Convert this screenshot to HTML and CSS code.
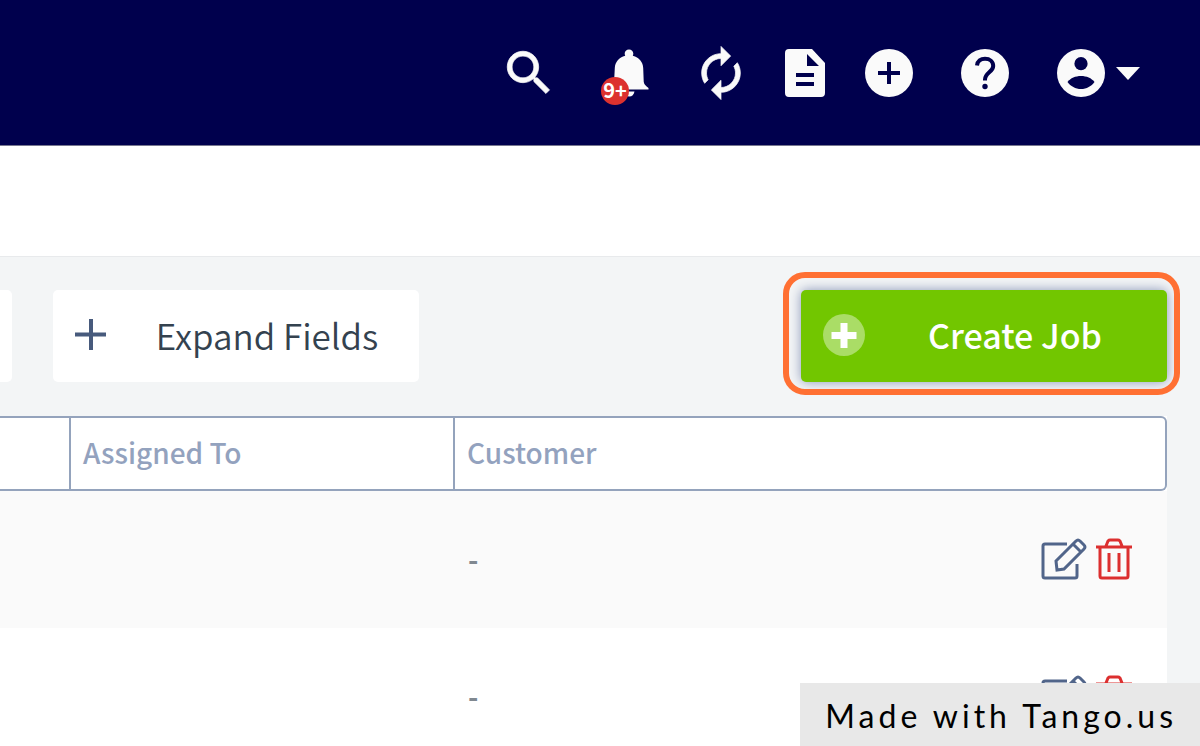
FILE: index.html
```html
<!DOCTYPE html>
<html lang="en">
<head>
    <meta charset="UTF-8">
    <meta name="viewport" content="width=device-width, initial-scale=1.0">
    <title>Jobs</title>
    <link rel="stylesheet" href="styles.css">
</head>
<body>
    <header class="topbar">
        <button type="button" class="icon-btn" aria-label="Search">
            <svg class="icon icon-thick" viewBox="0 0 24 24"><path d="M15.5 14h-.79l-.28-.27C15.41 12.59 16 11.11 16 9.5 16 5.91 13.09 3 9.5 3S3 5.91 3 9.5 5.91 16 9.5 16c1.61 0 3.09-.59 4.23-1.57l.27.28v.79l5 4.99L20.49 19l-4.99-5zm-6 0C7.01 14 5 11.99 5 9.5S7.01 5 9.5 5 14 7.01 14 9.5 11.99 14 9.5 14z"/></svg>
        </button>
        <button type="button" class="icon-btn" aria-label="Notifications">
            <svg class="icon" viewBox="0 0 58 58"><path d="M33 5.500c2.500 0 4.300 1.700 4.300 4 0 .8-.2 1.500-.5 2.200C43 13.500 47 18 47.200 24l.5 13.500c.2 2.500 1.500 4 4.800 6.500v1.500H14V44c3-2 4-4 4.100-6.500l.7-13.500c.3-6 4.200-10.500 10.400-12.300-.3-.7-.5-1.400-.5-2.200 0-2.300 1.800-4 4.300-4z"/><path d="M28 47.500h10.500c-.5 3-2.500 5-5.200 5s-4.800-2-5.300-5z"/></svg>
            <span class="count">9+</span>
        </button>
        <button type="button" class="icon-btn" aria-label="Refresh">
            <svg class="icon icon-thick" viewBox="0 0 24 24"><path d="M12 6v3l4-4-4-4v3c-4.420 0-8 3.580-8 8 0 1.570.46 3.030 1.240 4.260L6.700 14.800c-.45-.83-.7-1.790-.7-2.800 0-3.310 2.690-6 6-6zm6.760 1.740L17.300 9.200c.44.84.7 1.790.7 2.800 0 3.310-2.690 6-6 6v-3l-4 4 4 4v-3c4.420 0 8-3.580 8-8 0-1.570-.46-3.030-1.240-4.260z"/></svg>
        </button>
        <button type="button" class="icon-btn doc-btn" aria-label="Documents">
            <svg class="icon icon-doc" viewBox="0 0 40 48"><path fill-rule="evenodd" d="M4 0h23l13 14v30a4 4 0 0 1-4 4H4a4 4 0 0 1-4-4V4a4 4 0 0 1 4-4zM22 5v12h12zM11 24v4h18v-4zM11 33v4h18v-4z"/></svg>
        </button>
        <button type="button" class="icon-btn" aria-label="Add">
            <svg class="icon" viewBox="0 0 58 58"><circle cx="29" cy="29" r="24"/><path class="cut" d="M29 18v22M18 29h22"/></svg>
        </button>
        <button type="button" class="icon-btn" aria-label="Help">
            <svg class="icon" viewBox="0 0 58 58"><circle cx="29" cy="29" r="24"/><path class="cut" d="M21 21.500c.5-4.500 3.800-6.800 8-6.800 4.800 0 8.200 2.900 8.200 7.200 0 6-8.200 7-8.200 13.600v1"/><circle class="hole" cx="29" cy="42.500" r="2.700"/></svg>
        </button>
        <button type="button" class="icon-btn user-btn" aria-label="Account">
            <svg class="icon" viewBox="0 0 58 58"><circle cx="29" cy="29" r="24"/><circle class="hole" cx="29" cy="19.700" r="6.600"/><path class="hole" d="M15.500 38c3-4 8-6 13.500-6s10.500 2 13.500 6c-3 4.300-8 7-13.500 7s-10.500-2.700-13.500-7z"/></svg>
            <svg class="caret" viewBox="0 0 24 13"><path d="M0 0h24L12 13z"/></svg>
        </button>
    </header>
    <div class="subbar"></div>
    <main>
        <div class="toolbar">
            <button type="button" class="btn btn-cut" aria-label="Filter"></button>
            <button type="button" class="btn">
                <svg class="btn-icon" viewBox="0 0 42 42"><path class="plus-thin" d="M16 5v31M0 20.500h31"/></svg>
                <span class="btn-text">Expand Fields</span>
            </button>
            <div class="highlight">
                <button type="button" class="btn btn-create">
                    <svg class="btn-icon" viewBox="0 0 42 42"><circle cx="21" cy="21" r="21"/><path class="plus-bold" d="M21 9v25M8.500 21.500h25"/></svg>
                    <span class="btn-text">Create Job</span>
                </button>
            </div>
        </div>
        <table class="jobs">
            <colgroup>
                <col class="col-first">
                <col class="col-assigned">
                <col>
            </colgroup>
            <thead>
                <tr>
                    <th></th>
                    <th>Assigned To</th>
                    <th>Customer</th>
                </tr>
            </thead>
            <tbody>
                <tr>
                    <td></td>
                    <td></td>
                    <td>
                        <div class="cell">
                            <span>-</span>
                            <div class="actions">
                                <button type="button" class="icon-btn edit" aria-label="Edit">
                                    <svg viewBox="0 0 46 42"><path d="M26 6H4Q2 6 2 8v30q0 2 2 2h30q2 0 2-2V26"/><path d="M16 32l-1-9L35 3q2-2 4 0l4 4q2 2 0 4L23 31zM32 6l8 8"/></svg>
                                </button>
                                <button type="button" class="icon-btn delete" aria-label="Delete">
                                    <svg viewBox="0 0 36 42"><path d="M0 9h36M10 8l2-5q1-1 2-1h8q1 0 2 1l2 5M4 9v29q0 2 2 2h24q2 0 2-2V9"/><path d="M13 15v19M23 15v19"/></svg>
                                </button>
                            </div>
                        </div>
                    </td>
                </tr>
                <tr>
                    <td></td>
                    <td></td>
                    <td>
                        <div class="cell">
                            <span>-</span>
                            <div class="actions">
                                <button type="button" class="icon-btn edit" aria-label="Edit">
                                    <svg viewBox="0 0 46 42"><path d="M26 6H4Q2 6 2 8v30q0 2 2 2h30q2 0 2-2V26"/><path d="M16 32l-1-9L35 3q2-2 4 0l4 4q2 2 0 4L23 31zM32 6l8 8"/></svg>
                                </button>
                                <button type="button" class="icon-btn delete" aria-label="Delete">
                                    <svg viewBox="0 0 36 42"><path d="M0 9h36M10 8l2-5q1-1 2-1h8q1 0 2 1l2 5M4 9v29q0 2 2 2h24q2 0 2-2V9"/><path d="M13 15v19M23 15v19"/></svg>
                                </button>
                            </div>
                        </div>
                    </td>
                </tr>
            </tbody>
        </table>
    </main>
    <div class="made-with">Made with Tango.us</div>
</body>
</html>
```
FILE: styles.css
```css
* {
    box-sizing: border-box;
}

body {
    margin: 0;
    height: 100vh;
    overflow: hidden;
    background-color: #f3f5f6;
    font-family: "Noto Sans CJK SC", "Noto Sans", sans-serif;
}

button {
    font-family: inherit;
    cursor: pointer;
}

.topbar {
    display: flex;
    justify-content: flex-end;
    align-items: center;
    gap: 38px;
    padding: 44px 60px 43px 0;
    background-color: #00004d;
    border-bottom: 1px solid #77778f;
}

.icon-btn {
    position: relative;
    display: flex;
    align-items: center;
    padding: 0;
    border: none;
    background: none;
}

.icon {
    width: 58px;
    height: 58px;
    fill: #fafafa;
}

.icon-thick {
    stroke: #fafafa;
    stroke-width: 0.3;
}

.doc-btn {
    margin: 0 -3px;
}

.icon-doc {
    width: 40px;
    height: 48px;
}

.cut {
    fill: none;
    stroke: #00004d;
    stroke-width: 4;
}

.hole {
    fill: #00004d;
}

.count {
    position: absolute;
    left: 5px;
    bottom: -3px;
    width: 28px;
    height: 28px;
    border-radius: 50%;
    background-color: #dc322f;
    color: white;
    font-size: 20px;
    font-weight: bold;
    line-height: 26px;
    text-align: center;
}

.user-btn {
    gap: 6px;
}

.caret {
    width: 24px;
    height: 13px;
    fill: #fafafa;
}

.subbar {
    height: 111px;
    background-color: white;
    border-bottom: 1px solid #e8eaec;
}

main {
    padding-right: 33px;
}

.toolbar {
    display: flex;
    gap: 41px;
    padding: 33px 0 34px;
}

.btn {
    display: flex;
    align-items: center;
    width: 366px;
    height: 92px;
    padding: 0 2px 2px 22px;
    border: none;
    border-radius: 5px;
    background-color: white;
    color: #34424f;
    font-size: 35px;
    font-weight: 350;
}

.btn-cut {
    width: 12px;
    padding: 0;
    border-radius: 0 5px 5px 0;
}

.btn-icon {
    width: 42px;
    height: 42px;
}

.btn-text {
    flex: 1;
    line-height: 44px;
}

.plus-thin {
    stroke: #475a7c;
    stroke-width: 4;
}

.btn-create {
    background-color: #72c600;
    color: white;
    font-size: 34px;
    font-weight: 500;
    box-shadow: 0 0 12px #8a96b8;
}

.btn-create circle {
    fill: #aadd66;
}

.plus-bold {
    stroke: white;
    stroke-width: 7;
}

.highlight {
    position: relative;
    margin-left: auto;
}

.highlight::after {
    content: "";
    position: absolute;
    inset: -18px -13px -13px -18px;
    border: 6px solid #ff7033;
    border-radius: 22px;
    pointer-events: none;
}

.jobs {
    width: 100%;
    table-layout: fixed;
    border-collapse: separate;
    border-spacing: 0;
    background-color: white;
}

.col-first {
    width: 71px;
}

.col-assigned {
    width: 384px;
}

th {
    height: 75px;
    padding: 0 12px 4px;
    border: 2px solid #94a3bc;
    border-left: none;
    color: #93a2be;
    font-size: 28px;
    font-weight: 500;
    line-height: 36px;
    text-align: left;
}

th:last-child {
    border-radius: 0 6px 6px 0;
}

td {
    height: 137px;
    padding: 0 35px 2px 13px;
    color: #808890;
    font-size: 28px;
    font-weight: 700;
}

tbody tr:nth-child(odd) {
    background-color: #fafafa;
}

.cell {
    display: flex;
    justify-content: space-between;
    align-items: center;
}

.actions {
    display: flex;
    gap: 9px;
}

.actions svg {
    height: 42px;
    fill: none;
    stroke-width: 3;
}

.edit svg {
    width: 46px;
    stroke: #51658a;
}

.delete svg {
    width: 36px;
    stroke: #dc2f2f;
}

.made-with {
    position: fixed;
    right: 0;
    bottom: 0;
    padding: 14px 23px 12px 25px;
    background-color: #e8e8e8;
    color: black;
    font-family: Lato, sans-serif;
    font-size: 32px;
    line-height: 37px;
    letter-spacing: 4px;
}
```
